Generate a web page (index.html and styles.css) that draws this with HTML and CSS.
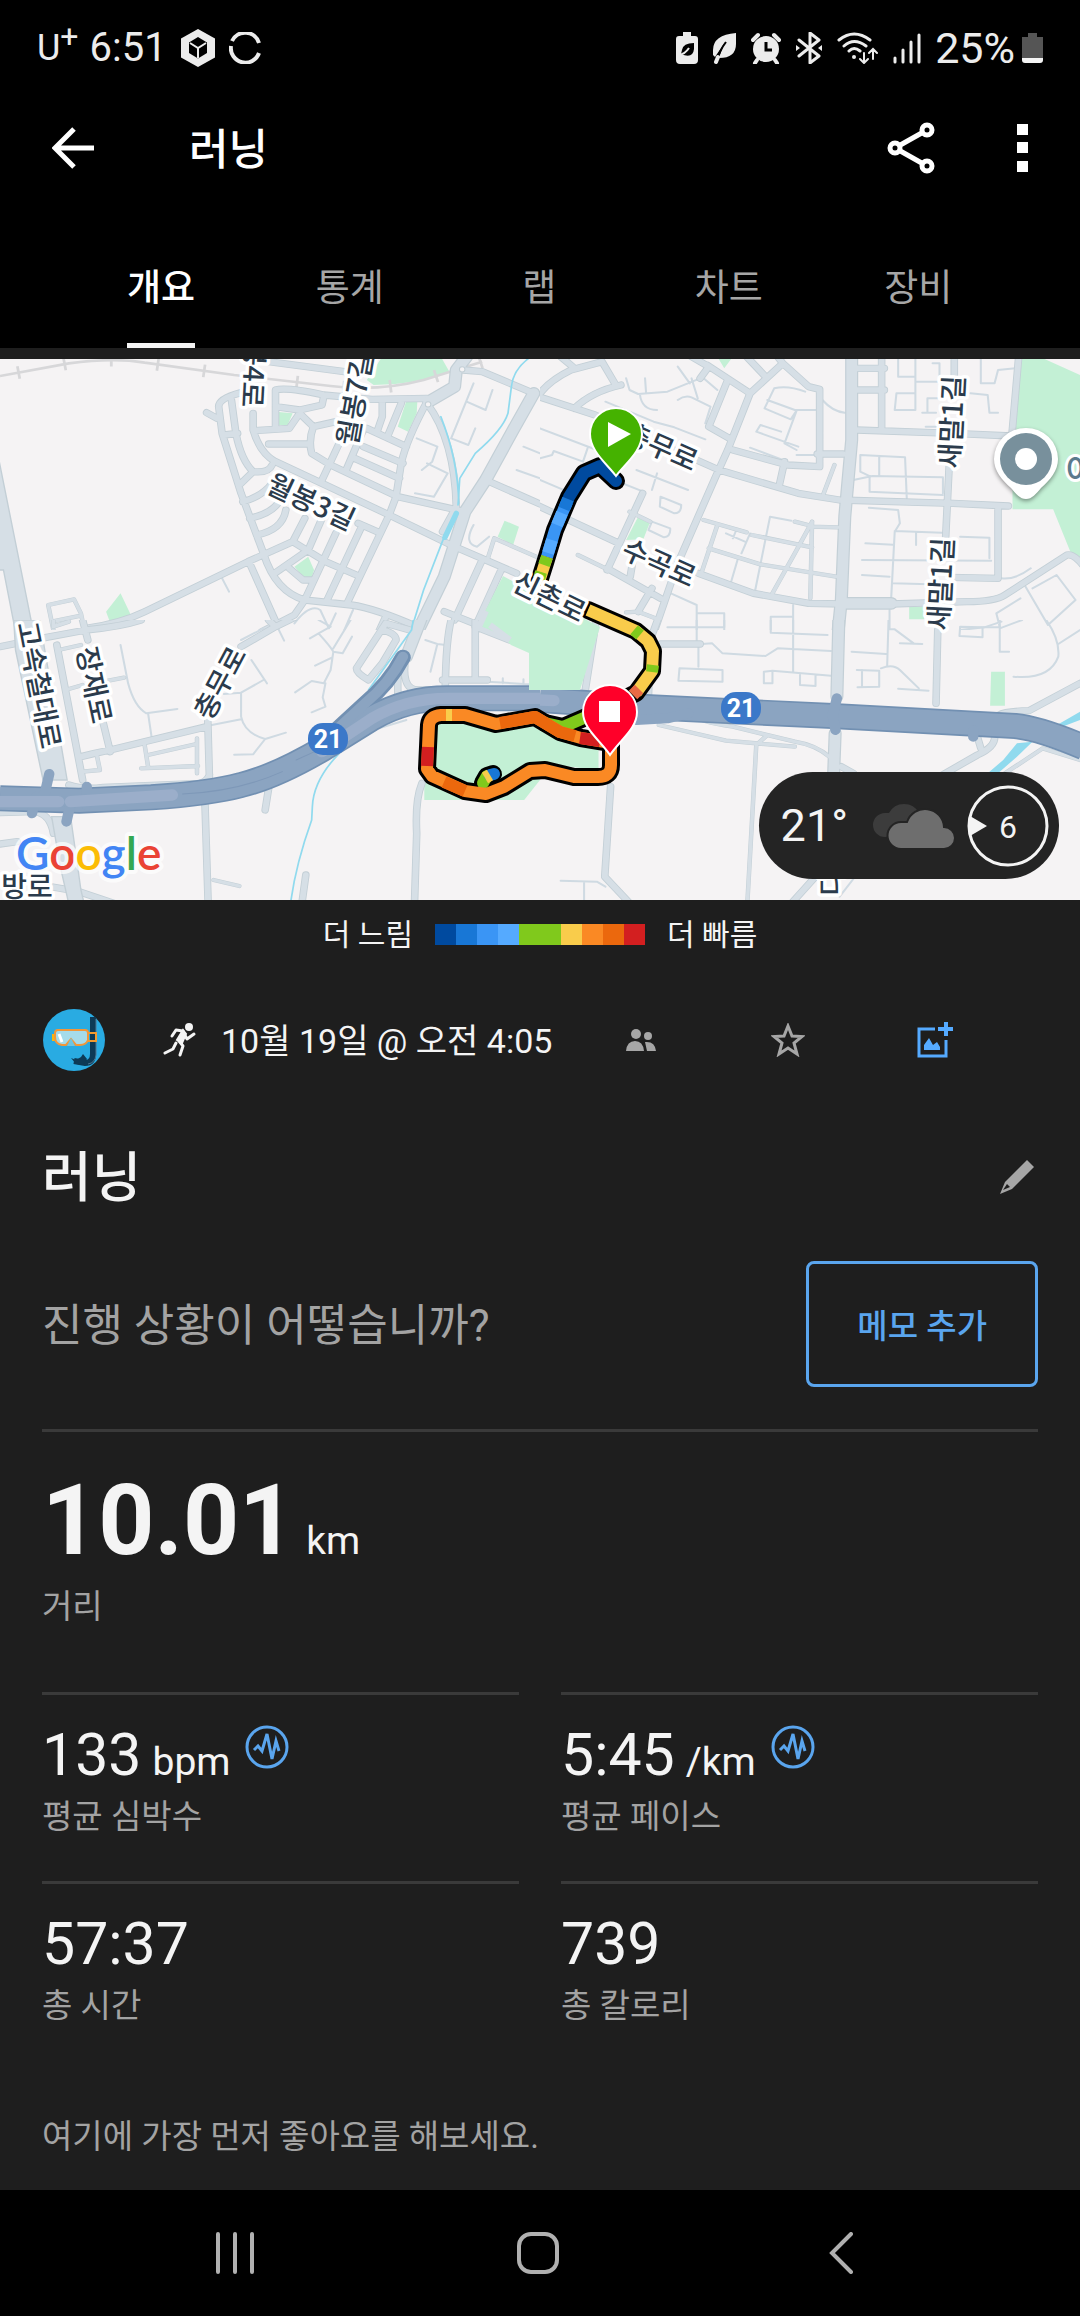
FILE: index.html
```
<!DOCTYPE html>
<html lang="ko">
<head>
    <meta charset="UTF-8">
    <meta name="viewport" content="width=device-width, initial-scale=1.0">
    <title>러닝</title>
    <link rel="stylesheet" href="styles.css">
</head>
<body>

    <!-- Phone status bar -->
    <div class="status-bar">
        <div class="status-left">
            <span class="carrier">U<sup>+</sup></span>
            <span class="clock">6:51</span>
            <svg class="icon-cube" width="36" height="40" viewBox="0 0 36 40">
                <path d="M18 1 L35 10.500 V29.500 L18 39 L1 29.500 V10.500Z" fill="#ececec"/>
                <path d="M18 9 L27 14.500 V25 L18 30.500 L9 25 V14.500Z" fill="#000"/>
                <path d="M10 15 L18 20 L26 15 M18 20 V30" fill="none" stroke="#ececec" stroke-width="2"/>
            </svg>
            <svg class="icon-c" width="32" height="32" viewBox="0 0 32 32">
                <path d="M30 11 A14.500 14.500 0 0 0 3 9 M2 14 A14.500 14.500 0 0 0 30 21" fill="none" stroke="#ececec" stroke-width="4"/>
            </svg>
        </div>
        <div class="status-right">
            <svg width="22" height="32" viewBox="0 0 22 32">
                <path d="M7 0 H15 V4 H19 Q22 4 22 7 V28 Q22 32 18 32 H4 Q0 32 0 28 V7 Q0 4 3 4 H7Z" fill="#ececec"/>
                <path d="M18 11 Q7 11 6 18 L5 22 Q17 27 18 17Z" fill="#000"/>
                <path d="M3 23 Q9 22 13 16" fill="none" stroke="#ececec" stroke-width="2"/>
            </svg>
            <svg width="25" height="32" viewBox="0 0 25 32">
                <path d="M24 1 Q1 3 1 18 V23 L3 25 L13 10 L7 25 L4 32 Q5 31 7 26 Q24 26 24 12Z" fill="#ececec"/>
                <path d="M5 30 Q7 19 14 10" fill="none" stroke="#000" stroke-width="2"/>
                <path d="M4 30 L6 25" stroke="#ececec" stroke-width="4" stroke-linecap="round"/>
            </svg>
            <svg width="30" height="32" viewBox="0 0 30 32">
                <circle cx="15" cy="17" r="13" fill="#ececec"/>
                <path d="M2 8 L7 3 M28 8 L23 3 M6 28 L4 31 M24 28 L26 31" stroke="#ececec" stroke-width="4" stroke-linecap="round"/>
                <path d="M15 10 V18 H21" fill="none" stroke="#000" stroke-width="3"/>
            </svg>
            <svg width="28" height="32" viewBox="0 0 28 32">
                <path d="M4 8 L24 24 L15 31 V1 L24 8 L4 24" fill="none" stroke="#ececec" stroke-width="3" stroke-linejoin="round" stroke-linecap="round"/>
                <path d="M1 13 L5 16 L1 19Z M27 13 L23 16 L27 19Z" fill="#ececec"/>
            </svg>
            <svg width="42" height="32" viewBox="0 0 42 32">
                <g fill="none" stroke="#ececec" stroke-width="3" stroke-linecap="round">
                    <path d="M2 8 Q17 -4 33 8 M7 14 Q17 5 29 14 M12 19 Q17 14 23 19"/>
                    <path d="M27 21 V30 M23 27 L27 31 L31 27 M36 27 V18 M32 21 L36 17 L40 21" stroke-width="2"/>
                </g>
                <circle cx="17" cy="25" r="2" fill="#ececec"/>
            </svg>
            <svg width="28" height="32" viewBox="0 0 28 32">
                <path d="M2 26 V30 M10 18 V30 M18 10 V30 M26 3 V30" stroke="#ececec" stroke-width="3" stroke-linecap="round"/>
            </svg>
            <span class="battery-text">25%</span>
            <svg width="21" height="30" viewBox="0 0 21 30">
                <path d="M6 0 H15 V4 H21 V26 H0 V4 H6Z" fill="#555"/>
                <path d="M0 25 H21 V27 Q21 30 18 30 H3 Q0 30 0 27Z" fill="#f4f4f4"/>
            </svg>
        </div>
    </div>

    <!-- App bar -->
    <header class="app-bar">
        <button class="icon-btn" aria-label="뒤로">
            <svg width="42" height="42" viewBox="0 0 42 42">
                <path d="M42 21 H3 M22 2 L3 21 L22 40" fill="none" stroke="#fff" stroke-width="5"/>
            </svg>
        </button>
        <h1>러닝</h1>
        <button class="icon-btn share" aria-label="공유">
            <svg width="48" height="54" viewBox="0 0 48 54">
                <path d="M8 27 L40 9 M8 27 L40 45" stroke="#fff" stroke-width="5"/>
                <g fill="#000" stroke="#fff" stroke-width="5">
                    <circle cx="8" cy="27" r="5"/>
                    <circle cx="40" cy="9" r="5"/>
                    <circle cx="40" cy="45" r="5"/>
                </g>
            </svg>
        </button>
        <button class="icon-btn" aria-label="더보기">
            <svg width="11" height="48" viewBox="0 0 11 48">
                <path d="M0 0 H11 V11 H0Z M0 18 H11 V29 H0Z M0 37 H11 V48 H0Z" fill="#fff"/>
            </svg>
        </button>
    </header>

    <nav class="tabs">
        <a href="#" class="active">개요</a>
        <a href="#">통계</a>
        <a href="#">랩</a>
        <a href="#">차트</a>
        <a href="#">장비</a>
    </nav>

    <!-- Route map -->
    <section class="map">
        <svg class="map-canvas" viewBox="0 0 1080 541">
            <!-- north west tile -->
            <svg x="0" y="-9" width="540" height="280" viewBox="0 0 1568 840" preserveAspectRatio="none">
                <defs>
                    <path id="nw-mid" d="M1080 148 L940 135 Q830 110 800 120 V230 M700 128 Q635 145 635 170 L645 250 L700 430 L765 610 Q800 725 885 750 L1020 765 Q1090 775 1215 832 M672 150 L685 250 Q700 330 735 365 L695 405 M650 255 L690 250 M735 190 V240 Q755 310 800 335 L935 400 L1130 495 L1320 590 L1500 670 M740 242 L840 235 L870 190 L910 230 L975 215 M910 230 Q895 270 905 310 L960 345 L1155 440 L1350 485 M800 170 L870 180 L935 165 L940 140 M985 280 L935 390 M1055 240 L1005 360 M1065 235 L1180 290 M1055 290 L1170 340 M1030 325 L1160 385 M1110 155 V200 L1095 245 M1165 160 L1125 260 M1080 148 L1240 145 M1240 155 Q1180 270 1165 340 L1150 440 L1130 495 L1010 755 M735 365 Q780 370 790 345 M705 455 Q760 440 790 400 M725 505 Q790 490 810 455 M745 555 Q820 540 830 480 M250 835 Q350 820 420 785 L720 635 L850 575 L885 505 M725 640 L805 825 M850 575 L945 635 L1035 675 M935 505 L895 600 L800 668 M975 550 L885 750 L855 795 L760 845 M1050 530 L950 750 M1040 520 L1095 545 M840 655 L880 690 H905 M1550 130 L1400 65 L1345 60 M1240 160 Q1320 270 1325 470 L1285 545 M1410 390 L1568 462 M1400 630 L1320 810 M1455 660 L1380 830 M1290 785 L1400 830 M1120 800 L1100 845 M780 35 L1000 65 M600 188 L630 205 M780 282 H895"/>
                    <path id="nw-wide" d="M1550 130 L1490 240 L1410 390 L1350 485 L1290 680 L1210 850 M1355 20 L1325 60 L1320 110 L1245 155"/>
                    <path id="nw-local" d="M155 840 L140 765 L215 748 L235 790 L245 840 M150 815 L235 797 M1435 565 L1568 625 M1435 565 L1415 630"/>
                </defs>
                <path class="park" d="M1110 20 H1280 L1305 65 Q1200 105 1085 105 L1065 90Z M800 185 L850 190 L835 225 H797Z M1180 152 L1212 150 L1210 190 L1185 245 L1155 230Z M1465 512 L1507 530 L1490 585 L1445 560Z M350 730 L380 795 L320 818 L308 785Z M895 620 L912 660 L905 682 L880 680 L855 650Z"/>
                <path class="rail" d="M0 78 L200 40 Q330 22 420 38 L680 75 L960 108 Q1100 125 1230 90 L1400 35"/>
                <path class="rail ties" d="M50 68 L200 40 Q330 22 420 38 L680 75 L960 108 Q1100 125 1230 90 L1400 35"/>
                <path class="lane" d="M1375 100 L1310 265 L1360 285 L1380 235 M1355 155 L1410 180 L1430 120 M1210 265 L1270 290 L1255 335 L1225 360 M1240 340 L1300 370 L1260 440 L1205 430 M1520 290 L1568 310 M1500 360 L1568 385 M1375 525 Q1345 580 1385 590 L1420 560 M645 685 L665 725 M855 820 Q900 760 930 780 L955 835 L975 790 M1025 780 L1000 840"/>
                <use class="edge local" href="#nw-local"/>
                <use class="edge mid" href="#nw-mid"/>
                <use class="edge wide" href="#nw-wide"/>
                <use class="road local" href="#nw-local"/>
                <use class="road mid" href="#nw-mid"/>
                <use class="road wide" href="#nw-wide"/>
                <path class="plaza" d="M-5 320 L97 845 H45 L10 660 H-5Z"/>
                <circle class="island" cx="1243" cy="163" r="8"/>
                <circle class="island" cx="1342" cy="58" r="8"/>
                <path class="water" d="M1535 25 Q1490 60 1485 110 L1475 190 Q1460 240 1380 310 L1335 385 L1330 465 M1280 200 Q1330 330 1332 460 M1290 560 L1230 720 L1200 820"/>
                <path class="water brook" d="M1325 490 L1292 562"/>
            </svg>

            <!-- north east tile -->
            <svg x="540" y="-9" width="540" height="280" viewBox="0 0 1568 840" preserveAspectRatio="none">
                <defs>
                    <path id="ne-mid" d="M-10 138 L160 195 L520 360 L750 430 L870 450 L1200 460 L1360 468 M0 130 Q30 90 90 60 L180 35 L220 105 M235 105 Q150 125 100 175 M60 20 L95 50 M485 45 L610 130 L545 300 L510 380 L400 640 L330 850 M440 20 L490 50 L465 85 M545 90 L490 230 L550 265 M610 130 L705 40 L780 110 L812 118 V350 L720 345 L560 300 M655 80 L600 20 M690 20 L705 40 M710 335 L695 405 M805 312 H880 M920 55 H1000 M915 120 H1000 M920 240 L1200 250 L1370 258 M992 20 V240 M1390 20 L1370 258 M1203 20 V80 M1188 350 L1178 560 M1330 475 V685 L1190 682 M-10 465 L225 578 M298 430 L195 660 M195 655 L350 745 M275 600 L262 680 M460 670 L620 730 L780 760 L880 762 M1020 762 L1240 755 Q1320 755 1350 735 L1530 615 Q1550 610 1580 650 M325 715 L285 785"/>
                    <path id="ne-wide" d="M905 20 V270 L885 500 L875 750 L865 850 M880 760 H1020"/>
                    <path id="ne-local" d="M475 510 L600 547 M515 525 L470 665 M822 435 L855 345 M615 555 L790 592 M490 595 L640 643 L860 680 M790 515 L740 610 L675 730 M790 515 L785 745 M785 530 L865 532 M740 515 L790 528 M110 615 L200 660 M260 485 L320 515 M285 785 L335 805 M285 785 L250 787"/>
                </defs>
                <path class="park" d="M1400 20 H1450 L1568 75 V620 L1540 605 L1490 478 H1372 V258Z M1072 770 H1115 V808 H1072Z M285 500 L320 515 L300 568 L250 570Z M515 20 H560 L535 55Z"/>
                <path class="lane" d="M0 235 L165 300 M0 325 L35 315 L40 303 L125 335 L138 295 M0 390 L80 425 M250 85 L260 120 L285 132 L370 125 L465 85 M305 85 L308 128 M290 132 Q295 180 340 180 M400 50 L435 100 M440 85 L458 145 M400 150 Q420 135 440 142 L495 170 L480 220 M475 85 L515 120 M190 155 L330 215 L390 232 L480 268 M280 360 L430 420 M340 370 L325 420 M215 390 L300 425 M350 440 L410 465 Q410 490 390 490 L348 470Z M325 515 L378 535 Q380 560 360 562 L315 540Z M660 150 L740 180 H800 M770 125 Q720 105 680 115 L652 175 L728 208 L745 182 L710 280 L745 300 M700 245 L640 225 L628 245 L750 290 M610 293 L705 330 M745 315 H800 M820 150 Q850 185 885 188"/>
                <path class="lane" d="M1040 27 V80 H1090 V27 M1090 80 V180 M1030 180 H1090 V130 H1035Z M1140 40 H1160 V95 H1090 M1110 188 H1150 M1125 185 V145 H1160 M1280 27 V100 H1320 L1330 60 L1380 55 M1250 130 L1300 135 L1305 188 H1330 M1120 230 H1160 M930 315 L1060 322 L1065 445 M930 315 V365 L960 380 M985 320 V375 M910 390 L965 378 L1170 382 V430 M957 382 V425 L1170 435 M955 473 L1040 480 L1045 520 L1030 545 L1020 740 M1030 543 L1168 548 M1092 548 V585 M945 580 L1025 584 M935 630 L1310 632 M935 675 L1015 680 M1025 700 L1130 703 M1220 560 L1305 563 V625 M1340 685 Q1380 690 1425 655 M1410 710 L1475 825 M1430 715 L1500 675 L1555 750 L1475 825 M1395 745 L1325 790 L1335 830 M540 550 L595 575 M570 540 L560 565 M668 500 L730 512 M668 500 L625 720 M610 550 L585 610 M575 625 L555 695 M380 730 L455 765 V840 M455 790 H535 V840 M735 765 V840 M735 800 H670 V840 M1015 780 V840 M1220 840 L1290 832 L1340 815"/>
                <use class="edge local" href="#ne-local"/>
                <use class="edge mid" href="#ne-mid"/>
                <use class="edge wide" href="#ne-wide"/>
                <use class="road local" href="#ne-local"/>
                <use class="road mid" href="#ne-mid"/>
                <use class="road wide" href="#ne-wide"/>
            </svg>

            <!-- south west tile -->
            <svg x="0" y="261" width="540" height="290" viewBox="0 0 1568 870" preserveAspectRatio="none">
                <defs>
                    <path id="sw-mid" d="M0 80 L120 55 L250 30 Q350 20 410 0 M165 75 L240 480 M235 410 L275 400 L320 390 L600 320 M240 0 L255 60 M300 310 L320 395 M603 290 L608 470 M780 0 L800 20 L860 -10 M800 20 L700 80 M1120 10 L1035 145 Q1035 160 1070 180 L1110 130 L1150 60 Q1150 40 1110 30 M1120 10 L1190 30 M1310 0 Q1295 60 1293 200 M1380 0 V180 M1285 180 H1415 M1380 20 L1480 60 M1155 130 V230 M1180 100 Q1160 210 1215 210 H1290 M595 545 L605 870 M1225 490 Q1205 540 1210 640 L1203 870 M0 578 L100 575 Q145 580 155 640 M120 795 L230 815 L345 855 M0 672 L50 665 M780 505 L770 570 M888 765 L878 840 M200 495 Q240 510 300 502 L580 490 Q600 485 608 465"/>
                    <path id="sw-wide" d="M1225 -10 L1180 110"/>
                    <path id="sw-local" d="M190 210 L240 195 M300 185 L360 173 M240 455 L290 450 L280 400 M410 445 L575 438 M420 375 L430 440 M430 405 L570 372 M572 355 V460 M620 780 L695 798 M170 90 L235 75 M155 20 V0 M155 20 L200 5"/>
                </defs>
                <path class="park" d="M1232 490 L1260 310 H1568 V480 L1522 540 H1232Z"/>
                <path class="lane" d="M350 75 L372 190 Q390 260 425 280 L515 267 M430 280 L440 350 M615 315 L700 298 M730 120 L775 190 M765 180 L700 218 V290 Q710 340 770 357 L830 338 M700 218 L650 222 M770 357 L735 403 L680 404 M805 20 L825 62 M925 0 L960 20 L925 40 L900 55 M925 40 Q960 80 968 95 L960 150 L940 190 L905 183 L857 217 M968 95 L995 100 L1022 50 M968 85 L1018 0 M965 112 L915 137 M945 190 L937 232 L945 260 L905 277 M1235 60 L1270 72 L1295 75 M1270 72 L1250 155 M1415 185 L1568 195 M1460 175 V190 M1520 178 V190 M700 60 L765 25 M1180 300 L1100 325"/>
                <use class="edge local" href="#sw-local"/>
                <use class="edge mid" href="#sw-mid"/>
                <use class="edge wide" href="#sw-wide"/>
                <use class="road local" href="#sw-local"/>
                <use class="road mid" href="#sw-mid"/>
                <use class="road wide" href="#sw-wide"/>
                <path class="plaza" d="M45 90 L125 480 H195 L115 0 H40Z M150 590 H205 L235 810 L250 875 H205 L175 740Z"/>
                <path class="water" d="M1200 0 L1195 30 L1070 210 M985 400 Q910 480 907 560 L905 600 Q860 730 845 840"/>
                <path class="highway-edge" d="M0 535 L230 542 L440 532 Q610 520 700 495 Q800 470 940 385 L1080 295 Q1180 235 1300 235 H1568"/>
                <path class="ramp-edge" d="M1170 112 Q1130 190 1060 250 L960 345"/>
                <path class="highway" d="M0 535 L230 542 L440 532 Q610 520 700 495 Q800 470 940 385 L1080 295 Q1180 235 1300 235 H1568"/>
                <path class="ramp" d="M1170 110 Q1130 190 1060 250 L960 345 M130 520 L143 462 M105 530 L93 580 M252 500 V555 M205 550 L193 605"/>
                <path class="tunnel" d="M0 545 H170 M205 545 L500 525 M935 395 L1080 295 Q1180 235 1300 235 H1568"/>
                <path class="highway-line" d="M530 522 Q690 515 820 455 M860 420 L920 392"/>
            </svg>

            <!-- south east tile -->
            <svg x="540" y="261" width="540" height="290" viewBox="0 0 1568 870" preserveAspectRatio="none">
                <defs>
                    <path id="se-mid" d="M165 -10 L130 220 M345 -10 L320 60 L315 230 M350 72 H465 M1155 30 L1150 250 M1330 290 Q1330 275 1420 272 L1568 190 M1320 345 Q1325 380 1270 405 L1160 470 M1270 350 L1280 385 M205 500 L188 770 L270 860 M800 770 L730 850 M875 440 L910 460"/>
                    <path id="se-wide" d="M868 -10 L862 230 M857 340 L852 480"/>
                    <path id="se-local" d="M345 315 L540 362 L740 380 M455 290 Q460 305 560 320 L740 365 Q800 375 840 410 M655 350 L628 375 L602 850 M1350 460 L1460 385 L1568 420"/>
                </defs>
                <path class="park" d="M1310 155 H1350 V257 H1307Z M0 300 L170 380 V450 L0 430Z"/>
                <path class="lane" d="M370 22 H535 V0 M455 0 V72 M460 72 V140 M470 72 L500 70 L530 100 L655 108 L690 85 L845 93 M670 0 V38 L835 45 M735 0 V155 M405 145 L530 150 V185 L402 182Z M650 190 V155 L675 152 L845 167 M675 155 V190 H650 M755 160 V195 L800 198 V165 M905 95 L1005 102 M1012 0 L1008 140 M1012 28 H1030 L1085 70 M1045 70 L1110 72 M920 150 L985 152 V200 L922 202 M935 150 V200 M990 145 Q1025 130 1045 150 L1100 205 M1040 206 L1128 212 M1220 20 L1285 22 V52 L1218 48Z M1285 22 H1335 V95 H1362 M1335 0 V25 L1400 0 M1470 0 Q1510 60 1505 110 Q1480 180 1375 170 M1505 72 L1568 30 M60 782 L165 785 L190 800 M128 785 V850 M930 750 L870 830"/>
                <use class="edge local" href="#se-local"/>
                <use class="edge mid" href="#se-mid"/>
                <use class="edge wide" href="#se-wide"/>
                <use class="road local" href="#se-local"/>
                <use class="road mid" href="#se-mid"/>
                <use class="road wide" href="#se-wide"/>
                <path d="M1568 275 L1510 310 L1480 325 L1505 325 L1568 300Z M1430 365 L1385 370 L1345 420 L1300 460 H1330 L1385 410Z" fill="#90daee"/>
                <path class="highway-edge" d="M0 240 L320 262 L850 288 L1380 318 Q1450 325 1580 382"/>
                <path class="highway" d="M0 240 L320 262 L850 288 L1380 318 Q1450 325 1580 382"/>
                <path class="ramp" d="M280 300 L370 295 L430 280 M862 235 L850 285 L858 330 M1258 330 V350"/>
                <path class="tunnel" d="M0 240 L40 242"/>
            </svg>

            <path class="park" d="M503 217 L600 268 L580 331 H529 V294 L511 286 L500 275 L478 266Z"/>
            <path d="M490 266 L510 281 M478 270 L486 252" stroke="#d6dfe6" stroke-width="6" fill="none"/>

            <!-- street names -->
            <g class="street">
                <text x="311" y="153" transform="rotate(25 311 143)">월봉3길</text>
                <text x="254" y="12" transform="rotate(93 254 2)">월봉4로</text>
                <text x="355" y="50" transform="rotate(-80 355 40)">월봉7길</text>
                <text x="661" y="98" transform="rotate(24 661 88)">충무로</text>
                <text x="659" y="214" transform="rotate(24 659 204)">수곡로</text>
                <text x="952" y="73" transform="rotate(-87 952 63)">새말1길</text>
                <text x="941" y="235" transform="rotate(-87 941 225)">새말1길</text>
                <text x="39" y="336" transform="rotate(79 39 326)">고속철대로</text>
                <text x="94" y="336" transform="rotate(78 94 326)">장재로</text>
                <text x="220" y="334" transform="rotate(-62 220 324)">충무로</text>
                <text x="27" y="538">방로</text>
                <text x="832" y="534" transform="rotate(-90 832 524)">디</text>
            </g>
            <text class="place" x="1066" y="123">아</text>

            <g class="shield">
                <rect x="308" y="364" width="40" height="32" rx="15"/>
                <text x="328" y="389">21</text>
                <rect x="721" y="333" width="40" height="32" rx="15"/>
                <text x="741" y="358">21</text>
            </g>

            <!-- run route coloured by pace -->
            <g class="route-edge">
                <path d="M616 122 L600 107 L584 114 L569 138 L555 171 L545 204 L538 226"/>
                <path d="M588 251 L636 272 L648 282 L653 292 L652 312 L636 334 L600 352 L563 368 L545 364"/>
                <path d="M611 384 L581 379 L560 373 L535 358 L496 365 L465 356 H441 Q430 357 429 366 L427 410 L432 417 L465 432 L486 435 L504 428 L530 412 L545 411 L574 418 H598 Q611 418 611 406Z"/>
                <path d="M483 424 L487 417 L493 415"/>
            </g>
            <g class="route">
                <path d="M616 122 L600 107 L584 114 L569 138 L566 146" stroke="#004a9f" stroke-linecap="round"/>
                <path d="M567 143 L555 171 L547 198" stroke="#3a95f5"/>
                <path d="M568 140 L564 150" stroke="#1877d6"/>
                <path d="M562 154 L557 166 M552 181 L548 194" stroke="#55aaff"/>
                <path d="M547 198 L538 226" stroke="#f9cc4b"/>
                <path d="M547 198 L544 206 M541 213 L539 220" stroke="#80c91c"/>
                <path d="M588 251 L636 272 L648 282 L653 292 L652 312 L636 334" stroke="#f9cc4b"/>
                <path d="M634 271 L640 276 M653 306 L652 313 M612 346 L600 352 L563 368 L545 364" stroke="#80c91c"/>
                <path d="M639 330 L633 336" stroke="#e86a45"/>
                <path d="M483 424 L487 417" stroke="#80c91c" stroke-linecap="round"/>
                <path d="M490 416 L494 415" stroke="#1877d6" stroke-linecap="round"/>
                <path d="M485 419 L490 416" stroke="#f9cc4b"/>
                <path d="M611 384 L581 379 L560 373 L535 358 L496 365 L465 356 H441 Q430 357 429 366 L427 410 L432 417 L465 432 L486 435 L504 428 L530 412 L545 411 L574 418 H598 Q611 418 611 406Z" stroke="#fa8924"/>
                <path d="M575 377 L560 373 L535 358 L500 364 M444 423 L465 432" stroke="#eb680d"/>
                <path d="M446 356 L452 356" stroke="#f9cc4b"/>
                <path d="M428 388 L427 407 M580 379 L600 382" stroke="#d31f20"/>
            </g>
            <text class="street-text" x="549" y="248" transform="rotate(26 549 238)">신촌로</text>

            <!-- start, finish and place pins -->
            <path d="M616 117 C606 104 590 92 590 75 A26 26 0 0 1 642 75 C642 92 626 104 616 117Z" fill="#45b200" stroke="#fff" stroke-width="2"/>
            <path d="M608 63 L631 75 L608 88Z" fill="#fff"/>
            <path d="M610 396 C600 381 583 370 583 353 A27 27 0 0 1 637 353 C637 370 620 381 610 396Z" fill="#ff0029" stroke="#fff" stroke-width="2"/>
            <path d="M599 342 H620 V363 H599Z" fill="#fff"/>
            <path class="poi" d="M1026 140 C1020 140 1016 135 1011 129 C1002 121 994 112 994 100 A32 31 0 0 1 1058 100 C1058 112 1050 121 1041 129 C1036 135 1032 140 1026 140Z"/>
            <circle cx="1026" cy="100" r="26" fill="#78909c"/>
            <circle cx="1026" cy="100" r="11" fill="#fff"/>

            <text class="google" x="16" y="511"><tspan fill="#4285f4">G</tspan><tspan fill="#ea4335">o</tspan><tspan fill="#fbbc05">o</tspan><tspan fill="#4285f4">g</tspan><tspan fill="#34a853">l</tspan><tspan fill="#ea4335">e</tspan></text>
        </svg>

        <div class="weather">
            <span>21°</span>
            <svg class="clouds" width="84" height="48" viewBox="0 0 84 48">
                <path d="M13 35 A12 12 0 0 1 13 11 H17 A17 17 0 0 1 47 11 V30Z" fill="#3c3c3c"/>
                <path d="M29 47 A13 13 0 0 1 29 20 H35 A19 19 0 0 1 72 25 A11 11 0 0 1 72 47Z" fill="#6e6e6e" stroke="#242424" stroke-width="2"/>
            </svg>
            <svg class="wind" width="82" height="82" viewBox="0 0 82 82">
                <circle cx="41" cy="41" r="39" fill="none" stroke="#f4f4f4" stroke-width="3"/>
                <path d="M3 31 L20 41 L3 51Z" fill="#f4f4f4"/>
                <text x="41" y="53">6</text>
            </svg>
        </div>
    </section>

    <main>
        <div class="legend">
            <span>더 느림</span>
            <div class="legend-bar">
                <i class="c1"></i><i class="c2"></i><i class="c3"></i><i class="c4"></i><i class="c5"></i><i class="c5"></i><i class="c6"></i><i class="c7"></i><i class="c8"></i><i class="c9"></i>
            </div>
            <span>더 빠름</span>
        </div>

        <!-- Activity info -->
        <div class="meta">
            <svg class="avatar" width="62" height="62" viewBox="0 0 62 62">
                <circle cx="31" cy="31" r="31" fill="#29abe2"/>
                <path d="M50 8 V45 Q50 54 42 54 L31 52" fill="none" stroke="#0d3a56" stroke-width="6"/>
                <path d="M28 49 L33 51 L38 48 L40 45 L44 50 L40 56 L33 55Z" fill="#0d3a56"/>
                <path d="M53 10 V46 Q52 54 45 55" fill="none" stroke="#4c7692" stroke-width="1"/>
                <path d="M9 25 H12 V32 H9Z" fill="#f7b512"/>
                <path d="M44 24 H53 V32 H44Z" fill="none" stroke="#f29a2e" stroke-width="2"/>
                <path d="M15 21 H42 Q45 21 45 24 V31 Q43 36 37 36 H33 L28 30 L23 36 H19 Q12 35 12 28 V24 Q12 21 15 21Z" fill="#a5dbea" stroke="#f2973a" stroke-width="2"/>
                <path d="M28 29 L32 37 H24Z" fill="#6cc5e2"/>
                <path d="M16 25 L19 33" stroke="#fff" stroke-width="3"/>
            </svg>
            <svg class="runner" width="34" height="36" viewBox="0 0 34 36">
                <circle cx="26" cy="5" r="4" fill="#f4f4f4"/>
                <path d="M9 14 L13 8 L20 9 L16 19 L20 24 L17 33 M20 10 L24 17 L31 12" fill="none" stroke="#f4f4f4" stroke-width="3" stroke-linecap="round" stroke-linejoin="round"/>
                <path d="M20 8 L23 12 L19 21 L14 18Z" fill="#f4f4f4" stroke="#f4f4f4" stroke-width="2"/>
                <path d="M13 21 L10 27 L2 31" fill="none" stroke="#f4f4f4" stroke-width="3" stroke-linecap="round"/>
            </svg>
            <time>10월 19일 @ 오전 4:05</time>
            <button class="meta-btn" aria-label="공개 범위">
                <svg width="30" height="24" viewBox="0 0 30 24">
                    <g fill="#a6a6a6">
                        <circle cx="10" cy="6" r="5"/>
                        <circle cx="22" cy="8" r="4"/>
                        <path d="M0 23 Q1 13 9 13 Q17 13 18 23Z M19 14 Q29 13 30 23 H21Z"/>
                    </g>
                </svg>
            </button>
            <button class="meta-btn" aria-label="즐겨찾기">
                <svg width="34" height="34" viewBox="0 0 34 34">
                    <path d="M17 3 L21 13 L31 13.500 L23 20 L26 31 L17 25 L8 31 L11 20 L3 13.500 L13 13Z" fill="none" stroke="#a6a6a6" stroke-width="3"/>
                </svg>
            </button>
            <button class="meta-btn" aria-label="사진 추가">
                <svg width="36" height="36" viewBox="0 0 36 36">
                    <path d="M18 7 H2 V34 H29 V18" fill="none" stroke="#55aaff" stroke-width="3"/>
                    <path d="M21 7 H36 M29 0 V14" stroke="#55aaff" stroke-width="4"/>
                    <path d="M7 28 V23 L12 16 L16 23 L20 20 L23 25 V28Z" fill="#55aaff"/>
                </svg>
            </button>
        </div>

        <div class="content">
            <div class="title-row">
                <h2>러닝</h2>
                <button class="icon-btn edit" aria-label="이름 수정">
                    <svg width="36" height="36" viewBox="0 0 36 36">
                        <path d="M28 1 L35 8 L13 30 L1 35 L6 23Z" fill="#a6a6a6"/>
                        <path d="M8 25 L11 28 L4 31Z" fill="#1e1e1e"/>
                    </svg>
                </button>
            </div>

            <div class="memo-row">
                <p>진행 상황이 어떻습니까?</p>
                <button class="memo-btn">메모 추가</button>
            </div>

            <div class="distance">
                <p class="big"><strong>10.01</strong> <span>km</span></p>
                <p class="label">거리</p>
            </div>

            <div class="stats">
                <div class="stat">
                    <p class="value">133 <span>bpm</span>
                        <svg class="pulse" width="44" height="44" viewBox="0 0 44 44">
                            <circle cx="22" cy="22" r="20" fill="none" stroke="#5aa5ee" stroke-width="3"/>
                            <path d="M9 25 L13 21 L17 26 L22 9 L27 34 L31 16 L34 26" fill="none" stroke="#5aa5ee" stroke-width="3"/>
                        </svg>
                    </p>
                    <p class="label">평균 심박수</p>
                </div>
                <div class="stat">
                    <p class="value">5:45 <span>/km</span>
                        <svg class="pulse" width="44" height="44" viewBox="0 0 44 44">
                            <circle cx="22" cy="22" r="20" fill="none" stroke="#5aa5ee" stroke-width="3"/>
                            <path d="M9 25 L13 21 L17 26 L22 9 L27 34 L31 16 L34 26" fill="none" stroke="#5aa5ee" stroke-width="3"/>
                        </svg>
                    </p>
                    <p class="label">평균 페이스</p>
                </div>
                <div class="stat">
                    <p class="value">57:37</p>
                    <p class="label">총 시간</p>
                </div>
                <div class="stat">
                    <p class="value">739</p>
                    <p class="label">총 칼로리</p>
                </div>
            </div>

            <p class="likes">여기에 가장 먼저 좋아요를 해보세요.</p>
        </div>
    </main>

    <!-- System navigation -->
    <footer class="nav-bar">
        <button class="icon-btn" aria-label="최근 앱">
            <svg width="38" height="42" viewBox="0 0 38 42">
                <path d="M2 2 V40 M19 2 V40 M36 2 V40" stroke="#b0b0b0" stroke-width="4" stroke-linecap="round"/>
            </svg>
        </button>
        <button class="icon-btn" aria-label="홈">
            <svg width="42" height="42" viewBox="0 0 42 42">
                <rect x="2" y="2" width="38" height="38" rx="12" fill="none" stroke="#b0b0b0" stroke-width="4"/>
            </svg>
        </button>
        <button class="icon-btn" aria-label="뒤로 가기">
            <svg width="24" height="42" viewBox="0 0 24 42">
                <path d="M22 2 L3 21 L22 40" fill="none" stroke="#b0b0b0" stroke-width="4" stroke-linecap="round"/>
            </svg>
        </button>
    </footer>

</body>
</html>
```
FILE: styles.css
```
* {
    box-sizing: border-box;
}

body {
    margin: 0;
    min-height: 100vh;
    display: flex;
    flex-direction: column;
    background-color: #1e1e1e;
    color: #f4f4f4;
    font-family: Roboto, "Noto Sans CJK KR", sans-serif;
    font-size: 33px;
    line-height: 40px;
}

h1, h2, p {
    margin: 0;
}

svg {
    display: block;
    flex: none;
}

button {
    font-family: inherit;
    cursor: pointer;
}

.icon-btn, .meta-btn {
    display: flex;
    justify-content: center;
    padding: 0;
    border: none;
    background: none;
}

/* Status bar */
.status-bar {
    display: flex;
    justify-content: space-between;
    align-items: center;
    height: 96px;
    padding: 0 37px;
    background-color: #000;
    color: #ececec;
    font-size: 40px;
}

.status-left, .status-right {
    display: flex;
    align-items: center;
}

.carrier {
    font-size: 36px;
}

.carrier sup {
    font-size: 32px;
    line-height: 0;
}

.clock {
    margin: 0 13px 0 11px;
}

.icon-cube {
    margin-right: 13px;
}

.status-right {
    gap: 14px;
}

.battery-text {
    margin-right: -7px;
    font-size: 43px;
}

/* App bar */
.app-bar {
    display: flex;
    align-items: center;
    height: 104px;
    padding: 0 52px;
    background-color: #000;
}

.app-bar h1 {
    flex: 1;
    margin-left: 95px;
    padding-top: 4px;
    font-size: 43px;
    font-weight: 500;
    color: #fff;
}

.share {
    margin-right: 82px;
}

/* Tabs */
.tabs {
    display: flex;
    padding: 69px 67px 0;
    background-color: #000;
    margin-bottom: 11px;
}

.tabs a {
    flex: 1;
    display: flex;
    justify-content: center;
    color: #a6a6a6;
    font-size: 37px;
    text-decoration: none;
}

.tabs a::after {
    content: "";
    height: 79px;
}

.tabs .active {
    flex: none;
    margin: 0 60px;
    border-bottom: 5px solid #f4f4f4;
    color: #fff;
    font-weight: 500;
}

.tabs .active::after {
    height: 74px;
}

/* Map */
.map {
    position: relative;
    background-color: #f5f3f4;
}

.map-canvas {
    width: 100%;
    height: auto;
}

.park {
    fill: #c3f0d5;
}

.edge, .road, .lane, .rail, .water, .highway, .highway-edge, .highway-line, .ramp, .ramp-edge, .tunnel {
    fill: none;
    stroke-linejoin: round;
    stroke-linecap: round;
}

.edge {
    stroke: #c3cfd6;
}

.road {
    stroke: #d6dfe6;
}

.edge.local {
    stroke-width: 13px;
}

.road.local {
    stroke-width: 10px;
}

.edge.mid {
    stroke-width: 22px;
}

.road.mid {
    stroke-width: 17px;
}

.edge.wide {
    stroke-width: 38px;
}

.road.wide {
    stroke-width: 31px;
}

.lane {
    stroke: #cfdae2;
    stroke-width: 6px;
}

.plaza {
    fill: #d6dfe6;
    stroke: #c3cfd6;
    stroke-width: 4px;
}

.island {
    fill: #f5f3f4;
    stroke: #c3cfd6;
    stroke-width: 3px;
}

.rail {
    stroke: #d7d7d9;
    stroke-width: 8px;
    stroke-linecap: butt;
}

.rail.ties {
    stroke-width: 38px;
    stroke-dasharray: 8 128;
}

.water {
    stroke: #90daee;
    stroke-width: 5px;
}

.brook {
    stroke-width: 16px;
}

.highway-edge {
    stroke: #7290b2;
    stroke-width: 78px;
    stroke-linecap: butt;
}

.highway {
    stroke: #8ba4c1;
    stroke-width: 68px;
    stroke-linecap: butt;
}

.ramp-edge {
    stroke: #7290b2;
    stroke-width: 46px;
}

.ramp {
    stroke: #8ba4c1;
    stroke-width: 30px;
}

.tunnel {
    stroke: #9baeca;
    stroke-width: 34px;
}

.highway-line {
    stroke: #7e98b8;
    stroke-width: 3px;
}

.street, .street-text {
    fill: #2b3b4c;
    stroke: #fff;
    stroke-width: 7px;
    stroke-linejoin: round;
    paint-order: stroke;
    font-family: "Noto Sans CJK KR", sans-serif;
    font-size: 28px;
    font-weight: 500;
    text-anchor: middle;
}

.place {
    fill: #5b7a8c;
    stroke: #fff;
    stroke-width: 6px;
    paint-order: stroke;
    font-size: 32px;
    font-weight: 500;
}

.shield rect {
    fill: #3b78c9;
}

.shield text {
    fill: #fff;
    font-size: 25px;
    font-weight: 700;
    text-anchor: middle;
}

.route-edge, .route {
    fill: none;
    stroke-linejoin: round;
}

.route-edge {
    stroke: #000;
    stroke-width: 18px;
    stroke-linecap: round;
}

.route {
    stroke-width: 12px;
}

.poi {
    fill: #fff;
    filter: drop-shadow(0 2px 2px rgba(0, 0, 0, 0.4));
}

.google {
    stroke: rgba(255, 255, 255, 0.7);
    stroke-width: 8px;
    stroke-linejoin: round;
    paint-order: stroke;
    font-family: Lato, sans-serif;
    font-size: 46px;
    font-weight: 600;
}

/* Weather badge over the map */
.weather {
    position: absolute;
    right: 21px;
    bottom: 21px;
    display: flex;
    align-items: center;
    height: 107px;
    padding: 0 10px 0 22px;
    border-radius: 54px;
    background-color: #242424;
    font-size: 45px;
}

.clouds {
    margin: 0 11px 0 24px;
}

.wind text {
    fill: #f4f4f4;
    font-size: 32px;
    text-anchor: middle;
}

/* Pace legend */
.legend {
    display: flex;
    justify-content: center;
    align-items: center;
    gap: 22px;
    height: 68px;
    font-size: 30px;
}

.legend span {
    padding-top: 1px;
}

.legend-bar {
    display: flex;
    width: 210px;
    height: 21px;
}

.legend-bar i {
    flex: 1;
}

.c1 { background-color: #004a9f; }
.c2 { background-color: #1877d6; }
.c3 { background-color: #3a95f5; }
.c4 { background-color: #55aaff; }
.c5 { background-color: #80c91c; }
.c6 { background-color: #f9cc4b; }
.c7 { background-color: #fa8924; }
.c8 { background-color: #eb680d; }
.c9 { background-color: #d31f20; }

/* Activity info row */
.meta {
    display: flex;
    align-items: center;
    height: 144px;
    padding: 0 72px 0 43px;
}

.runner {
    margin: 0 24px 0 58px;
}

.meta time {
    flex: 1;
    padding-top: 2px;
    font-size: 34px;
    white-space: nowrap;
}

.meta-btn {
    width: 147px;
}

.content {
    padding: 0 42px;
}

.title-row {
    display: flex;
    justify-content: space-between;
    align-items: center;
    height: 130px;
}

.title-row h2 {
    padding-top: 4px;
    font-size: 54px;
    font-weight: 500;
}

.edit {
    margin-right: 3px;
}

/* Memo */
.memo-row {
    display: flex;
    justify-content: space-between;
    align-items: center;
    padding: 19px 0 42px;
    border-bottom: 3px solid #3a3a3a;
    color: #a3a3a3;
    font-size: 44px;
}

.memo-row p {
    padding-top: 4px;
}

.memo-btn {
    height: 126px;
    padding: 0 48px;
    border: 3px solid #5aa5ee;
    border-radius: 8px;
    background: none;
    color: #5aa5ee;
    font-size: 33px;
    font-weight: 500;
}

/* Distance */
.distance {
    padding: 39px 0 65px;
}

.big {
    display: flex;
    align-items: baseline;
    gap: 11px;
    height: 100px;
    margin-bottom: 15px;
    font-size: 98px;
    line-height: 100px;
}

.big span {
    font-size: 39px;
    line-height: 40px;
}

.label {
    padding-top: 1px;
    color: #a3a3a3;
}

/* Stats grid */
.stats {
    display: grid;
    grid-template-columns: 1fr 1fr;
    column-gap: 42px;
}

.stat {
    padding: 30px 0 44px;
    border-top: 3px solid #3a3a3a;
}

.value {
    display: flex;
    align-items: baseline;
    gap: 11px;
    height: 60px;
    margin-bottom: 11px;
    font-size: 59px;
    line-height: 60px;
}

.value span {
    font-size: 39px;
}

.pulse {
    align-self: flex-start;
    margin-left: 4px;
}

.likes {
    padding: 47px 0 33px;
    color: #a3a3a3;
}

/* System navigation */
.nav-bar {
    display: flex;
    align-items: center;
    height: 126px;
    margin-top: auto;
    padding: 0 88px 0 84px;
    background-color: #000;
}

.nav-bar .icon-btn {
    flex: 1;
}
```
